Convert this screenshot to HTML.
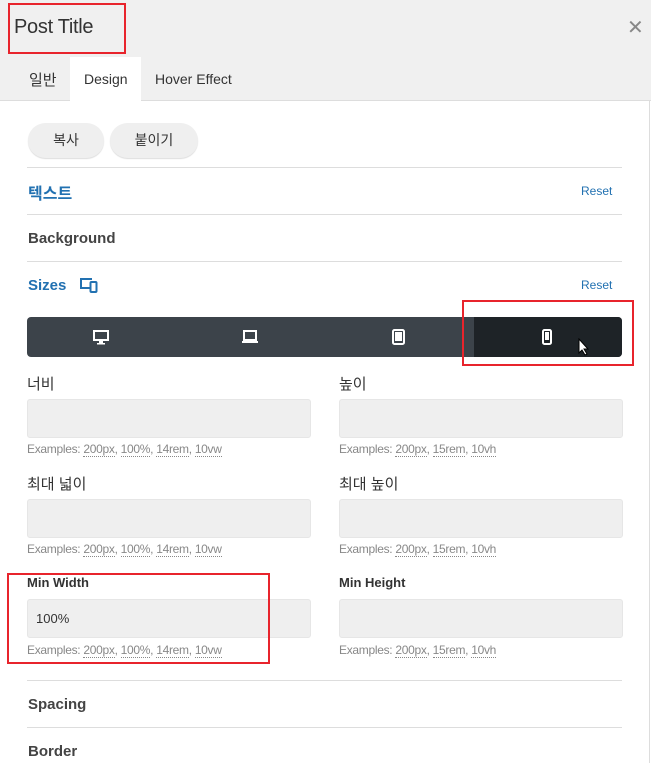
<!DOCTYPE html>
<html><head><meta charset="utf-8"><style>
*{box-sizing:border-box;margin:0;padding:0}
body{width:651px;height:763px;overflow:hidden;background:#fff;font-family:"Liberation Sans","Noto Sans CJK KR",sans-serif;color:#333;position:relative}
.a{position:absolute}
.hdr{left:0;top:0;width:651px;height:101px;background:#f0f0f0;border-bottom:1px solid #ddd}
.t{font-size:14px;color:#333}
.line{left:27px;width:595px;height:1px;background:#ddd}
.btn{background:#efefef;border-radius:18px;height:35px;top:123px;font-size:13px;text-align:center;line-height:35px;box-shadow:0 1px 1px #ddd}
.h{font-size:15px;font-weight:600;color:#444}
.blue{color:#2271b1}
.reset{font-size:12px;color:#2271b1;left:581px}
.inp{background:#efefef;border:1px solid #e6e6e6;border-radius:3px;height:39px;width:284px}
.ex{font-size:12px;color:#888;letter-spacing:-0.3px}
.ex u{text-decoration:none;border-bottom:1px dotted #888}
.lab{font-size:14px;color:#333;font-weight:600}
.red{border:2px solid #e8242c}
</style></head><body>
<div class="a hdr"></div>
<div class="a" style="left:14px;top:16px;font-size:20px;color:#333;letter-spacing:-0.3px">Post Title</div>
<div class="a red" style="left:8px;top:3px;width:118px;height:51px"></div>
<div class="a" style="left:627px;top:15px;font-size:20px;color:#888">✕</div>
<div class="a" style="left:70px;top:57px;width:71px;height:45px;background:#fff"></div>
<div class="a t" style="left:29px;top:69px;font-size:15px">일반</div>
<div class="a t" style="left:84px;top:71px">Design</div>
<div class="a t" style="left:155px;top:71px">Hover Effect</div>
<div class="a" style="left:649px;top:101px;width:1px;height:662px;background:#ddd"></div>
<div class="a btn" style="left:28px;width:76px;font-size:14px">복사</div>
<div class="a btn" style="left:110px;width:88px;font-size:14px">붙이기</div>
<div class="a line" style="top:167px"></div>
<div class="a h blue" style="left:28px;top:180px;font-size:16px">텍스트</div>
<div class="a reset" style="top:184px">Reset</div>
<div class="a line" style="top:214px"></div>
<div class="a h" style="left:28px;top:230px">Background</div>
<div class="a line" style="top:261px"></div>
<div class="a h blue" style="left:28px;top:277px">Sizes</div>
<svg class="a" style="left:79px;top:277px" width="20" height="16" viewBox="0 0 20 16"><path d="M1 1h12v2H3v7h8v2H1z" fill="#2271b1"/><rect x="11.5" y="5" width="6" height="10" rx="1" fill="none" stroke="#2271b1" stroke-width="2"/></svg>
<div class="a reset" style="top:278px">Reset</div>
<div class="a" style="left:27px;top:317px;width:595px;height:40px;background:#3c434a;border-radius:4px;overflow:hidden"><div class="a" style="left:447px;top:0;width:148px;height:40px;background:#1e2327"></div></div>
<svg class="a" style="left:93px;top:330px" width="16" height="15" viewBox="0 0 16 15"><rect x="1" y="1" width="14" height="9" fill="none" stroke="#fff" stroke-width="2"/><rect x="6" y="10" width="4" height="3" fill="#fff"/><rect x="4" y="13" width="8" height="1.5" fill="#fff"/></svg>
<svg class="a" style="left:241px;top:330px" width="18" height="14" viewBox="0 0 18 14"><rect x="3" y="1" width="12" height="9" fill="none" stroke="#fff" stroke-width="2"/><rect x="1" y="11" width="16" height="2" fill="#fff"/></svg>
<svg class="a" style="left:392px;top:329px" width="13" height="16" viewBox="0 0 13 16"><rect x="1" y="1" width="11" height="14" rx="1.5" fill="none" stroke="#fff" stroke-width="2"/><rect x="3" y="3" width="7" height="9" fill="#fff"/></svg>
<svg class="a" style="left:542px;top:329px" width="10" height="16" viewBox="0 0 10 16"><rect x="1" y="1" width="8" height="14" rx="1.5" fill="none" stroke="#fff" stroke-width="2"/><rect x="3" y="3" width="4" height="8" fill="#fff"/></svg>
<svg class="a" style="left:578px;top:338px" width="12" height="18" viewBox="0 0 12 18"><path d="M1 1v14l3-3 3 5 2-1-3-5h4z" fill="#fff" stroke="#000" stroke-width="1"/></svg>
<div class="a red" style="left:462px;top:300px;width:172px;height:66px"></div>

<div class="a lab" style="left:27px;top:373px;font-weight:normal;font-size:15px">너비</div>
<div class="a lab" style="left:339px;top:373px;font-weight:normal;font-size:15px">높이</div>
<div class="a inp" style="left:27px;top:399px"></div>
<div class="a inp" style="left:339px;top:399px"></div>
<div class="a ex" style="left:27px;top:442px">Examples: <u>200px</u>, <u>100%</u>, <u>14rem</u>, <u>10vw</u></div>
<div class="a ex" style="left:339px;top:442px">Examples: <u>200px</u>, <u>15rem</u>, <u>10vh</u></div>

<div class="a lab" style="left:27px;top:473px;font-weight:normal;font-size:15px">최대 넓이</div>
<div class="a lab" style="left:339px;top:473px;font-weight:normal;font-size:15px">최대 높이</div>
<div class="a inp" style="left:27px;top:499px"></div>
<div class="a inp" style="left:339px;top:499px"></div>
<div class="a ex" style="left:27px;top:542px">Examples: <u>200px</u>, <u>100%</u>, <u>14rem</u>, <u>10vw</u></div>
<div class="a ex" style="left:339px;top:542px">Examples: <u>200px</u>, <u>15rem</u>, <u>10vh</u></div>

<div class="a lab" style="left:27px;top:575px;font-size:13px">Min Width</div>
<div class="a lab" style="left:339px;top:575px;font-size:13px">Min Height</div>
<div class="a inp" style="left:27px;top:599px;font-size:13px;padding:11px 8px">100%</div>
<div class="a inp" style="left:339px;top:599px"></div>
<div class="a ex" style="left:27px;top:643px">Examples: <u>200px</u>, <u>100%</u>, <u>14rem</u>, <u>10vw</u></div>
<div class="a ex" style="left:339px;top:643px">Examples: <u>200px</u>, <u>15rem</u>, <u>10vh</u></div>
<div class="a red" style="left:7px;top:573px;width:263px;height:91px"></div>

<div class="a line" style="top:680px"></div>
<div class="a h" style="left:28px;top:696px">Spacing</div>
<div class="a line" style="top:727px"></div>
<div class="a h" style="left:28px;top:743px">Border</div>
</body></html>
